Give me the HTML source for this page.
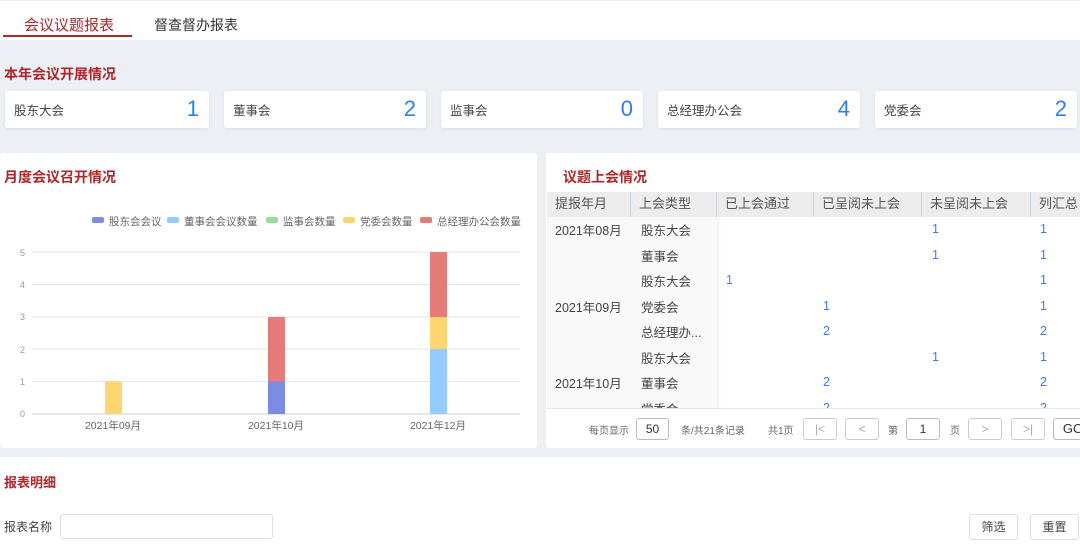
<!DOCTYPE html>
<html><head><meta charset="utf-8"><style>
*{margin:0;padding:0;box-sizing:border-box}
body{width:1080px;height:551px;overflow:hidden;background:#eceff3;font-family:"Liberation Sans","Noto Sans CJK SC",sans-serif;position:relative;color:#333}
.a{position:absolute}
.red{color:#b0262a}
.card{position:absolute;top:91px;height:37px;background:#fff;border-radius:3px;box-shadow:0 1px 3px rgba(0,0,0,.08);font-size:12.5px;color:#444}
.card span{position:absolute;left:9px;top:9px}
.card b{position:absolute;right:10px;top:5px;font-weight:normal;font-size:22px;color:#2f7df6}
.th{position:absolute;top:192px;height:25px;line-height:24px;font-size:13px;color:#555;padding-left:8px;border-right:1px solid #cdd5e3;background:#ececec}
.c{position:absolute;font-size:12.5px;color:#444}
.n{position:absolute;font-size:12.5px;color:#3d7be8}
.pb{position:absolute;top:418px;height:22px;border:1px solid #ccc;border-radius:3px;font-size:12px;text-align:center;line-height:20px;color:#aaa}
</style></head><body>
<div class="a" style="left:0;top:0;width:1080px;height:40px;background:#fff;border-top:1px solid #eee"></div>
<div class="a red" style="left:24px;top:14px;font-size:15px">会议议题报表</div>
<div class="a" style="left:154px;top:15px;font-size:14px;color:#333">督查督办报表</div>
<div class="a" style="left:3px;top:35px;width:129px;height:2px;background:#b0262a"></div>
<div class="a red" style="left:4px;top:64px;font-size:14px;font-weight:bold">本年会议开展情况</div>
<div class="card" style="left:5px;width:204px"><span>股东大会</span><b>1</b></div>
<div class="card" style="left:224px;width:202px"><span>董事会</span><b>2</b></div>
<div class="card" style="left:441px;width:202px"><span>监事会</span><b>0</b></div>
<div class="card" style="left:658px;width:202px"><span>总经理办公会</span><b>4</b></div>
<div class="card" style="left:875px;width:202px"><span>党委会</span><b>2</b></div>

<div class="a" style="left:0;top:153px;width:537px;height:295px;background:#fff;border-radius:3px"></div>
<div class="a red" style="left:4px;top:167px;font-size:14px;font-weight:bold">月度会议召开情况</div>
<svg class="a" style="left:0;top:200px" width="537" height="240" font-family="Liberation Sans,Noto Sans CJK SC,sans-serif">
<g font-size="10.5" fill="#666">
<rect x="92" y="17" width="12" height="6" rx="2" fill="#7b8de2"/><text x="109" y="25">股东会会议</text>
<rect x="167" y="17" width="12" height="6" rx="2" fill="#96cbff"/><text x="184" y="25">董事会会议数量</text>
<rect x="266" y="17" width="12" height="6" rx="2" fill="#98dc98"/><text x="283" y="25">监事会数量</text>
<rect x="343" y="17" width="12" height="6" rx="2" fill="#fdd670"/><text x="360" y="25">党委会数量</text>
<rect x="420" y="17" width="12" height="6" rx="2" fill="#e77b7a"/><text x="437" y="25">总经理办公会数量</text>
</g>
<g stroke="#e6e6e6"><line x1="32" x2="520" y1="52" y2="52"/><line x1="32" x2="520" y1="84.5" y2="84.5"/><line x1="32" x2="520" y1="117" y2="117"/><line x1="32" x2="520" y1="149" y2="149"/><line x1="32" x2="520" y1="181.5" y2="181.5"/><line x1="32" x2="520" y1="214" y2="214" stroke="#ccc"/></g>
<g font-size="9" fill="#999"><text x="20" y="56">5</text><text x="20" y="88">4</text><text x="20" y="120">3</text><text x="20" y="153">2</text><text x="20" y="185">1</text><text x="20" y="217">0</text></g>
<rect x="105" y="181.5" width="17" height="32.5" fill="#fdd670"/>
<rect x="268" y="181.5" width="17" height="32.5" fill="#7b8de2"/><rect x="268" y="117" width="17" height="64.5" fill="#e77b7a"/>
<rect x="430" y="149" width="17" height="65" fill="#96cbff"/><rect x="430" y="117" width="17" height="32" fill="#fdd670"/><rect x="430" y="52" width="17" height="65" fill="#e77b7a"/>
<g font-size="10.5" fill="#666" text-anchor="middle"><text x="113" y="229">2021年09月</text><text x="276" y="229">2021年10月</text><text x="438" y="229">2021年12月</text></g>
</svg>

<div class="a" style="left:546px;top:153px;width:540px;height:295px;background:#fff;border-radius:3px;overflow:hidden">
</div>
<div class="a red" style="left:563px;top:167px;font-size:14px;font-weight:bold">议题上会情况</div>
<div class="a" style="left:547px;top:217px;width:170px;height:191px;background:#f9f9f9;box-shadow:2px 0 3px rgba(0,0,0,.06)"></div>
<div class="th" style="left:547px;width:84px">提报年月</div>
<div class="th" style="left:631px;width:86px">上会类型</div>
<div class="th" style="left:717px;width:97px">已上会通过</div>
<div class="th" style="left:814px;width:108px">已呈阅未上会</div>
<div class="th" style="left:922px;width:109px">未呈阅未上会</div>
<div class="th" style="left:1031px;width:60px;border:0">列汇总</div>
<div class="a" style="left:547px;top:217px;width:533px;height:191px;overflow:hidden">
<div class="c" style="left:8px;top:3px">2021年08月</div><div class="c" style="left:94px;top:3px">股东大会</div><div class="n" style="left:385px;top:5px">1</div><div class="n" style="left:493px;top:5px">1</div>
<div class="c" style="left:94px;top:29px">董事会</div><div class="n" style="left:385px;top:31px">1</div><div class="n" style="left:493px;top:31px">1</div>
<div class="c" style="left:94px;top:54px">股东大会</div><div class="n" style="left:179px;top:56px">1</div><div class="n" style="left:493px;top:56px">1</div>
<div class="c" style="left:8px;top:80px">2021年09月</div><div class="c" style="left:94px;top:80px">党委会</div><div class="n" style="left:276px;top:82px">1</div><div class="n" style="left:493px;top:82px">1</div>
<div class="c" style="left:94px;top:105px">总经理办...</div><div class="n" style="left:276px;top:107px">2</div><div class="n" style="left:493px;top:107px">2</div>
<div class="c" style="left:94px;top:131px">股东大会</div><div class="n" style="left:385px;top:133px">1</div><div class="n" style="left:493px;top:133px">1</div>
<div class="c" style="left:8px;top:156px">2021年10月</div><div class="c" style="left:94px;top:156px">董事会</div><div class="n" style="left:276px;top:158px">2</div><div class="n" style="left:493px;top:158px">2</div>
<div class="c" style="left:94px;top:182px">党委会</div><div class="n" style="left:276px;top:184px">2</div><div class="n" style="left:493px;top:184px">2</div>
</div>
<div class="a" style="left:547px;top:408px;width:533px;height:1px;background:#e6e6e6"></div>
<div class="a" style="left:589px;top:422px;font-size:10px;color:#666">每页显示</div>
<div class="pb" style="left:636px;width:33px;color:#333;border-color:#bbb">50</div>
<div class="a" style="left:681px;top:422px;font-size:10px;color:#666">条/共21条记录</div>
<div class="a" style="left:768px;top:422px;font-size:10px;color:#666">共1页</div>
<div class="pb" style="left:803px;width:34px">|&lt;</div>
<div class="pb" style="left:845px;width:34px">&lt;</div>
<div class="a" style="left:888px;top:422px;font-size:10px;color:#666">第</div>
<div class="pb" style="left:906px;width:34px;color:#333;border-color:#bbb">1</div>
<div class="a" style="left:950px;top:422px;font-size:10px;color:#666">页</div>
<div class="pb" style="left:968px;width:34px">&gt;</div>
<div class="pb" style="left:1011px;width:34px">&gt;|</div>
<div class="pb" style="left:1053px;width:40px;color:#333;border-color:#bbb;font-size:13px">GO</div>

<div class="a" style="left:0;top:457px;width:1080px;height:94px;background:#fff"></div>
<div class="a red" style="left:4px;top:472px;font-size:13px;font-weight:bold">报表明细</div>
<div class="a" style="left:4px;top:518px;font-size:12px;color:#444">报表名称</div>
<div class="a" style="left:60px;top:514px;width:213px;height:25px;border:1px solid #ddd;border-radius:3px"></div>
<div class="a" style="left:969px;top:514px;width:49px;height:26px;border:1px solid #ddd;border-radius:3px;font-size:12px;text-align:center;line-height:24px;color:#444">筛选</div>
<div class="a" style="left:1030px;top:514px;width:49px;height:26px;border:1px solid #ddd;border-radius:3px;font-size:12px;text-align:center;line-height:24px;color:#444">重置</div>
</body></html>
